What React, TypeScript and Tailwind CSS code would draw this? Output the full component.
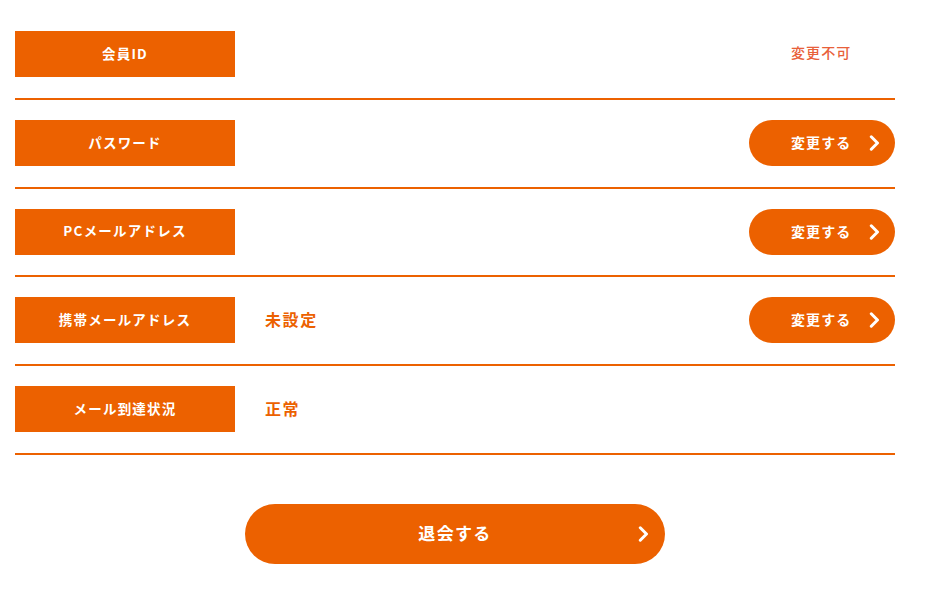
import React from "react";

const ORANGE = "bg-[#ec6100]";

function Chevron({ size = 16 }: { size?: number }) {
  return (
    <svg width={size * 0.7} height={size} viewBox="0 0 11 16" fill="none">
      <path d="M2.2 1.8 L8.4 8 L2.2 14.2" stroke="white" strokeWidth="3" strokeLinecap="round" strokeLinejoin="round" />
    </svg>
  );
}

function ChangeButton() {
  return (
    <button className={`relative w-[146px] h-[46px] rounded-full ${ORANGE} text-white flex items-center`}>
      <span className="absolute left-[42px] top-[15px] text-[14px] font-bold tracking-[0.08em] leading-none">変更する</span>
      <span className="absolute left-[120px] top-[15px] flex">
        <Chevron />
      </span>
    </button>
  );
}

type Row = { label: string; value?: string; right?: "button" | "fixed" };

const rows: Row[] = [
  { label: "会員ID", right: "fixed" },
  { label: "パスワード", right: "button" },
  { label: "PCメールアドレス", right: "button" },
  { label: "携帯メールアドレス", value: "未設定", right: "button" },
  { label: "メール到達状況", value: "正常" },
];

export default function App() {
  return (
    <div
      className="w-[926px] h-[598px] bg-white overflow-hidden"
      style={{ fontFamily: '"Noto Sans CJK JP", "Noto Sans", sans-serif' }}
    >
      <div className="ml-[15px] w-[880px] pt-[11px]">
        {rows.map((r) => (
          <div key={r.label} className="flex items-center pt-5 pb-[20.75px] border-b-2 border-[#ec6100]">
            <div className={`w-[220px] h-[46px] ${ORANGE} flex items-center justify-center pb-[2px] text-white text-[13.5px] font-bold tracking-[0.09em]`}>
              {r.label}
            </div>
            <div className="flex-1 pl-[30px] pb-[3px] text-[#ec6100] text-[16px] font-bold tracking-[0.1em]">{r.value}</div>
            {r.right === "button" && <ChangeButton />}
            {r.right === "fixed" && (
              <div className="w-[146px] h-[46px] flex items-center pb-[3px] pl-[42px] text-[#e8603a] text-[14px] font-medium tracking-[0.08em]">
                変更不可
              </div>
            )}
          </div>
        ))}
      </div>
      <div className="mt-[49px] ml-[245px]">
        <button className={`relative w-[420px] h-[60px] rounded-full ${ORANGE} text-white`}>
          <span className="absolute inset-0 flex items-center justify-center pb-[2px] text-[17px] font-bold tracking-[0.08em]">退会する</span>
          <span className="absolute left-[393px] top-[22px] flex">
            <Chevron size={16} />
          </span>
        </button>
      </div>
    </div>
  );
}
